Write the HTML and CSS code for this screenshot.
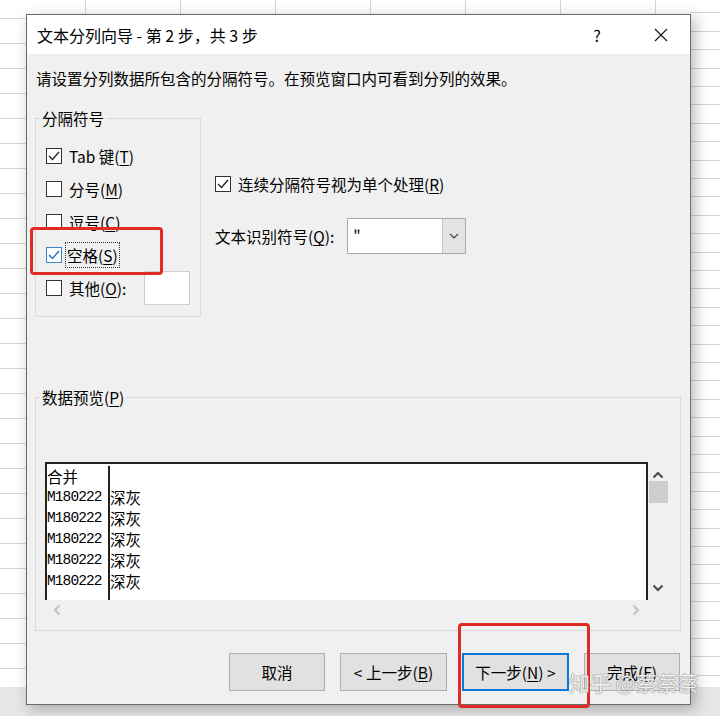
FILE: index.html
```html
<!DOCTYPE html>
<html lang="zh-CN">
<head>
    <meta charset="UTF-8">
    <meta name="viewport" content="width=device-width, initial-scale=1.0">
    <title>文本分列向导</title>
    <link rel="stylesheet" href="styles.css">
</head>
<body>

    <div class="dialog">
        <!-- Title bar -->
        <div class="titlebar">
            <span class="title">文本分列向导 - 第 2 步，共 3 步</span>
            <span class="help">?</span>
            <span class="close">
                <svg width="14" height="14" viewBox="0 0 14 14"><path d="M1 1 L13 13 M13 1 L1 13" stroke="#1a1a1a" stroke-width="1.2" fill="none"/></svg>
            </span>
        </div>

        <div class="content">
            <p class="intro">请设置分列数据所包含的分隔符号。在预览窗口内可看到分列的效果。</p>

            <div class="options">
                <fieldset class="delims">
                    <legend>分隔符号</legend>
                    <label class="check">
                        <span class="box"><svg width="14" height="14" viewBox="0 0 14 14"><path d="M2 7 L5.5 10.5 L12 3" stroke="#222" stroke-width="1.3" fill="none"/></svg></span>
                        <span>Tab 键(<u>T</u>)</span>
                    </label>
                    <label class="check">
                        <span class="box"></span>
                        <span>分号(<u>M</u>)</span>
                    </label>
                    <label class="check">
                        <span class="box"></span>
                        <span>逗号(<u>C</u>)</span>
                    </label>
                    <label class="check">
                        <span class="box blue"><svg width="14" height="14" viewBox="0 0 14 14"><path d="M2 7 L5.5 10.5 L12 3" stroke="#1a6cc0" stroke-width="1.3" fill="none"/></svg></span>
                        <span class="focus">空格(<u>S</u>)</span>
                    </label>
                    <label class="check">
                        <span class="box"></span>
                        <span>其他(<u>O</u>):</span>
                        <span class="other-input"></span>
                    </label>
                </fieldset>

                <div class="side">
                    <label class="check">
                        <span class="box"><svg width="14" height="14" viewBox="0 0 14 14"><path d="M2 7 L5.5 10.5 L12 3" stroke="#222" stroke-width="1.3" fill="none"/></svg></span>
                        <span>连续分隔符号视为单个处理(<u>R</u>)</span>
                    </label>
                    <div class="qualifier">
                        <span>文本识别符号(<u>Q</u>):</span>
                        <div class="select">
                            <span class="value">"</span>
                            <span class="arrow">
                                <svg width="10" height="6" viewBox="0 0 10 6"><path d="M1 1 L5 5 L9 1" stroke="#444" stroke-width="1.2" fill="none"/></svg>
                            </span>
                        </div>
                    </div>
                </div>
            </div>

            <fieldset class="preview">
                <legend>数据预览(<u>P</u>)</legend>
                <div class="grid-wrap">
                    <div class="table">
                        <div class="col first">
                            <div class="cell">合并</div>
                            <div class="cell mono">M180222</div>
                            <div class="cell mono">M180222</div>
                            <div class="cell mono">M180222</div>
                            <div class="cell mono">M180222</div>
                            <div class="cell mono">M180222</div>
                        </div>
                        <div class="col">
                            <div class="cell"></div>
                            <div class="cell">深灰</div>
                            <div class="cell">深灰</div>
                            <div class="cell">深灰</div>
                            <div class="cell">深灰</div>
                            <div class="cell">深灰</div>
                        </div>
                    </div>
                    <div class="vscroll">
                        <svg width="12" height="8" viewBox="0 0 12 8"><path d="M1.5 6.5 L6 2 L10.5 6.5" stroke="#4a4a4a" stroke-width="2" fill="none"/></svg>
                        <span class="thumb"></span>
                        <span class="spacer"></span>
                        <svg width="12" height="8" viewBox="0 0 12 8"><path d="M1.5 1.5 L6 6 L10.5 1.5" stroke="#4a4a4a" stroke-width="2" fill="none"/></svg>
                    </div>
                </div>
                <div class="hscroll">
                    <svg width="8" height="12" viewBox="0 0 8 12"><path d="M6.5 1.5 L2 6 L6.5 10.5" stroke="#c2c2c2" stroke-width="2" fill="none"/></svg>
                    <svg width="8" height="12" viewBox="0 0 8 12"><path d="M1.5 1.5 L6 6 L1.5 10.5" stroke="#c2c2c2" stroke-width="2" fill="none"/></svg>
                </div>
            </fieldset>

            <!-- Buttons -->
            <div class="buttons">
                <button class="btn narrow">取消</button>
                <button class="btn wide">&lt; 上一步(<u>B</u>)</button>
                <button class="btn wide default">下一步(<u>N</u>) &gt;</button>
                <button class="btn narrow">完成(<u>F</u>)</button>
            </div>
        </div>
    </div>

    <!-- Annotation marks drawn over the screenshot -->
    <div class="mark mark-space"></div>
    <div class="mark mark-next"></div>
    <div class="watermark">知乎 @蔡蔡蔡</div>

</body>
</html>
```

FILE: styles.css
```css
body {
    margin: 0;
    height: 716px;
    overflow: hidden;
    font-family: "Noto Sans CJK SC", sans-serif;
    color: #000;
    background-color: #fff;
    background-image:
        linear-gradient(#e6e6e6, #e6e6e6),
        repeating-linear-gradient(to bottom, #fff 0 17.4px, #d4d4d4 17.4px 18.4px),
        linear-gradient(to bottom, transparent 24px, #d4d4d4 24px),
        linear-gradient(to right, transparent 94px, #d4d4d4 94px);
    background-size: 100% 29px, 30px 100%, 100% 25px, 95px 100%;
    background-position: 0 bottom, right -5px, 0 -6px, -9px 0;
    background-repeat: no-repeat, no-repeat, repeat, repeat;
}

u {
    text-decoration: underline;
    text-underline-offset: 2px;
    text-decoration-thickness: 1px;
}

.dialog {
    box-sizing: border-box;
    width: 665px;
    height: 691px;
    margin: 14px 0 0 26px;
    border: 1px solid #6b6b6b;
    background-color: #f0f0f0;
    box-shadow: 4px 4px 14px rgba(0,0,0,0.28);
}

.titlebar {
    height: 39px;
    background-color: #fff;
    display: flex;
    align-items: center;
    font-size: 16px;
    line-height: 20px;
}

.title {
    flex: 1;
    padding-left: 10px;
}

.help {
    width: 14px;
    text-align: center;
    margin-right: 50px;
}

.close {
    display: flex;
    margin-right: 22px;
}

.content {
    font-size: 15.5px;
    line-height: 20px;
}

.intro {
    margin: 14px 0 0 9px;
}

.options {
    display: flex;
    margin-top: 20px;
    height: 209px;
}

fieldset {
    margin: 0 0 0 8px;
    border: 1px solid #d9d9d9;
    padding: 0;
    min-width: 0;
}

legend {
    padding: 0 2px;
    margin-left: -6px;
}

.delims {
    box-sizing: border-box;
    width: 166px;
    padding: 11px 0 0 10px;
}

.check {
    display: flex;
    align-items: center;
    gap: 7px;
    height: 33px;
}

.box {
    box-sizing: border-box;
    width: 16px;
    height: 16px;
    border: 1px solid #333;
    background-color: #fff;
    display: flex;
    align-items: center;
    justify-content: center;
    flex-shrink: 0;
}

.box.blue {
    border-color: #3b86cf;
}

.focus {
    outline: 1px dotted #333;
    padding: 2px 1px;
    margin-left: -3px;
}

.other-input {
    box-sizing: border-box;
    width: 46px;
    height: 34px;
    margin-left: 11px;
    background-color: #fff;
    border: 1px solid #cfcfcf;
}

.side {
    margin: 66px 0 0 14px;
}

.side .check {
    height: 20px;
}

.qualifier {
    display: flex;
    align-items: center;
    gap: 13px;
    margin-top: 24px;
}

.select {
    box-sizing: border-box;
    width: 119px;
    height: 36px;
    display: flex;
    background-color: #fff;
    border: 1px solid #a9a9a9;
}

.select .value {
    flex: 1;
    padding: 7px 0 0 5px;
    line-height: 20px;
}

.select .arrow {
    width: 22px;
    background-color: #e3e3e3;
    border-left: 1px solid #c4c4c4;
    display: flex;
    align-items: center;
    justify-content: center;
}

.preview {
    box-sizing: border-box;
    width: 646px;
    height: 244px;
    margin-top: 70px;
    padding: 55px 12px 0 9px;
}

.preview legend {
    margin-left: -5px;
}

.grid-wrap {
    display: flex;
    height: 138px;
}

.table {
    flex: 1;
    display: flex;
    background-color: #fff;
    border: 2px solid #222;
    border-bottom: none;
    padding-top: 2px;
}

.col {
    flex: 1;
}

.col.first {
    flex: none;
    width: 61px;
    border-right: 2px solid #222;
}

.cell {
    height: 21px;
    line-height: 21px;
    font-size: 15.5px;
    white-space: nowrap;
}

.cell.mono {
    font-family: "Liberation Mono", monospace;
    font-size: 14.5px;
    letter-spacing: -0.9px;
}

.vscroll {
    width: 20px;
    display: flex;
    flex-direction: column;
    align-items: center;
    padding-top: 9px;
}

.vscroll .thumb {
    width: 19px;
    height: 22px;
    margin-top: 2px;
    background-color: #cdcdcd;
}

.vscroll .spacer {
    flex: 1;
}

.vscroll svg:last-child {
    margin-bottom: 8px;
}

.hscroll {
    height: 20px;
    display: flex;
    align-items: center;
    justify-content: space-between;
    padding: 0 28px 0 8px;
}

.buttons {
    display: flex;
    justify-content: flex-end;
    gap: 15px;
    margin-top: 22px;
    padding-right: 10px;
}

.btn {
    box-sizing: border-box;
    height: 38px;
    background-color: #e1e1e1;
    border: 1px solid #adadad;
    font-family: "Noto Sans CJK SC", sans-serif;
    font-size: 15.5px;
    color: #000;
    padding: 0;
}

.btn.narrow {
    width: 96px;
}

.btn.wide {
    width: 107px;
}

.btn.default {
    border: 2px solid #0a78d4;
}

.mark {
    position: absolute;
    box-sizing: border-box;
    border: 3px solid #e02a24;
    border-radius: 4px;
}

.mark-space {
    left: 30px;
    top: 227px;
    width: 133px;
    height: 48px;
}

.mark-next {
    left: 458px;
    top: 623px;
    width: 132px;
    height: 85px;
}

.watermark {
    position: absolute;
    left: 569px;
    top: 669px;
    font-size: 21px;
    line-height: 26px;
    color: rgba(255,255,255,0.9);
    text-shadow: 0 0 1px #777, 0 0 1px #777;
    white-space: nowrap;
}
```
